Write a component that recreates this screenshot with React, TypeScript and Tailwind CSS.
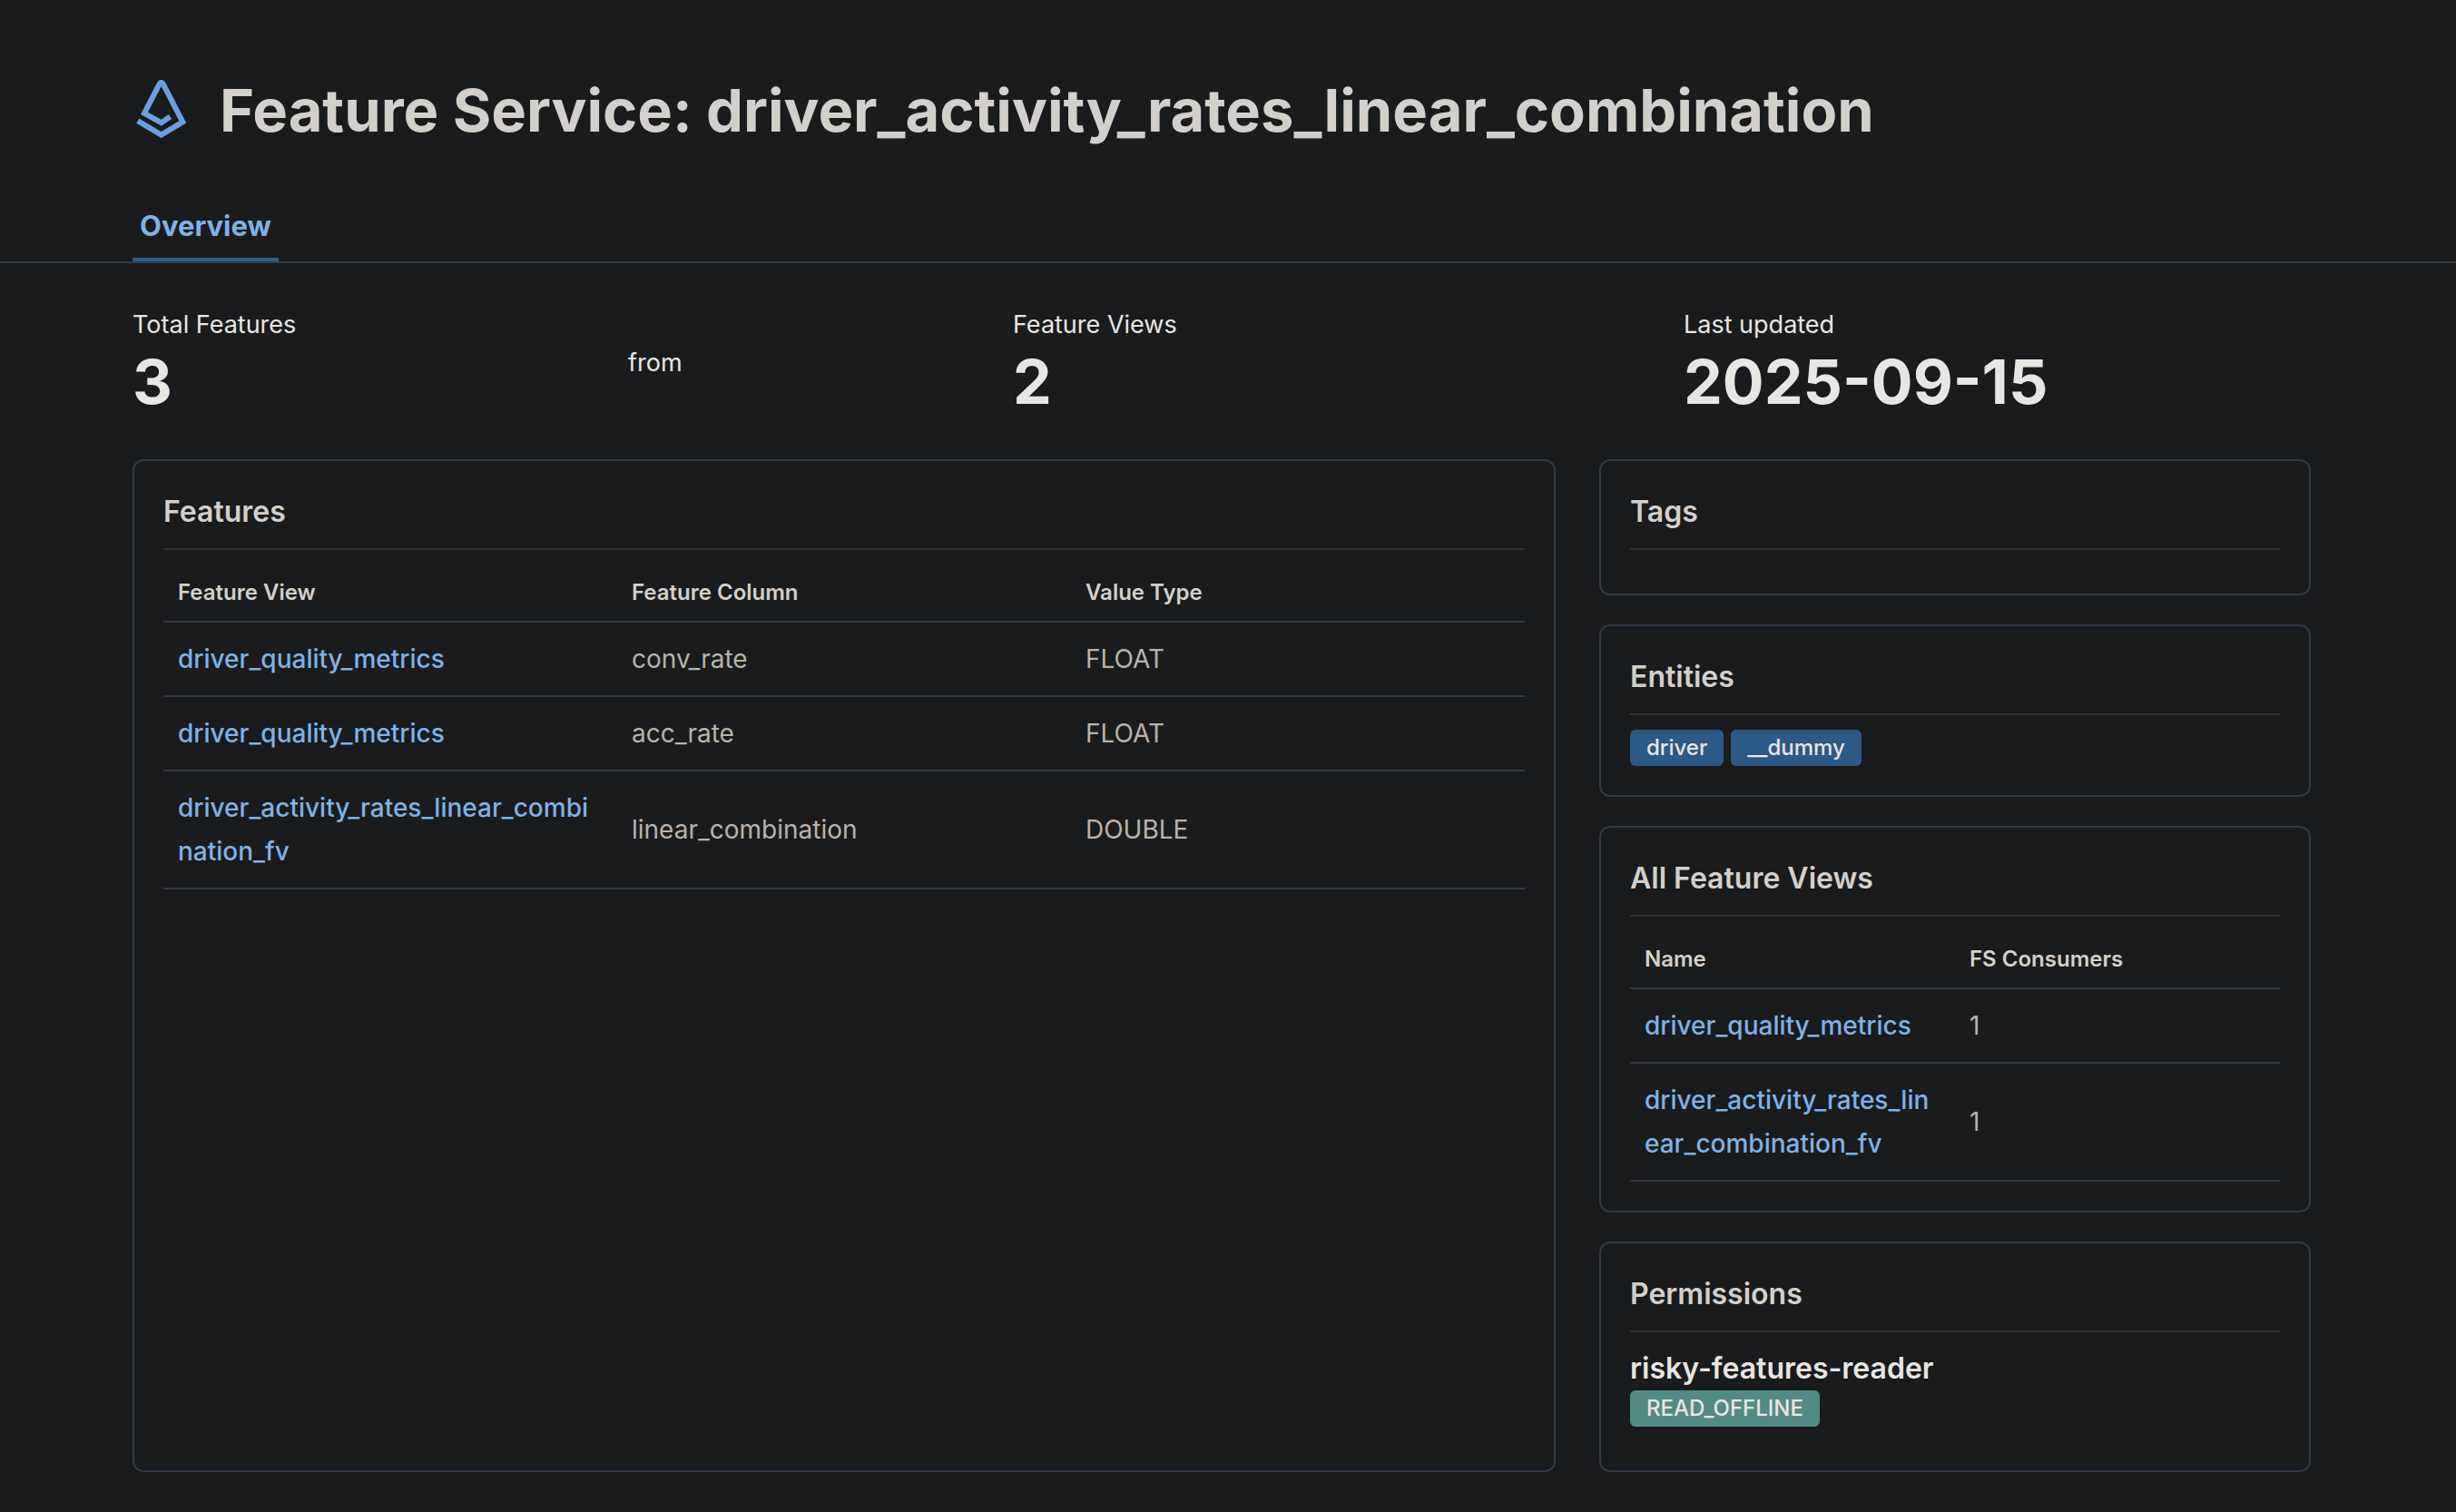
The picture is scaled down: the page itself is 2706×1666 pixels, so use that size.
import type { ReactNode } from "react";

const features = [
  { view: "driver_quality_metrics", column: "conv_rate", type: "FLOAT" },
  { view: "driver_quality_metrics", column: "acc_rate", type: "FLOAT" },
  {
    view: "driver_activity_rates_linear_combination_fv",
    column: "linear_combination",
    type: "DOUBLE",
  },
];

const featureViews = [
  { name: "driver_quality_metrics", consumers: 1 },
  { name: "driver_activity_rates_linear_combination_fv", consumers: 1 },
];

function ServiceIcon() {
  return (
    <svg viewBox="0 0 64 64" className="size-16 shrink-0" fill="none" stroke="#699fdc" strokeWidth="6" aria-hidden="true">
      <path d="M5.800 45.200 31.700 60.600 55.300 46.300 34.300 5.700Q31.700.200 29.100 5.700L13 36.900 31.700 47.200 41.500 40.600" />
    </svg>
  );
}

function Panel({ title, children }: { title: string; children?: ReactNode }) {
  return (
    <section className="rounded-xl border-2 border-[#313a49] p-8">
      <h2 className="text-[32px] leading-12 font-semibold text-[#d3d0cb]">{title}</h2>
      <hr className="my-4 border-t-2 border-[#303234]" />
      {children}
    </section>
  );
}

function Table({ columns, rows }: { columns: string[]; rows: ReactNode[][] }) {
  return (
    <table className="w-full table-fixed border-separate border-spacing-0 text-left">
      <thead>
        <tr>
          {columns.map((column) => (
            <th
              key={column}
              scope="col"
              className="h-16 border-b-2 border-[#313a49] px-4 text-2xl font-semibold text-[#d3d0cb]"
            >
              {column}
            </th>
          ))}
        </tr>
      </thead>
      <tbody>
        {rows.map((row, r) => (
          <tr key={r}>
            {row.map((cell, c) => (
              <td
                key={c}
                className="border-b-2 border-[#313a49] p-4 text-[28px] leading-12 break-words text-[#b8b3ab]"
              >
                {cell}
              </td>
            ))}
          </tr>
        ))}
      </tbody>
    </table>
  );
}

function TextLink({ children }: { children: ReactNode }) {
  return (
    <a href="#" className="font-medium text-[#7fb2e5] hover:underline">
      {children}
    </a>
  );
}

function Stat({ label, value }: { label: string; value: string }) {
  return (
    <div>
      <div className="text-[27px] leading-10">{label}</div>
      <div className="text-[68px] leading-21 font-bold">{value}</div>
    </div>
  );
}

export default function App() {
  return (
    <div className="min-h-screen bg-[#1a1b1c] pb-11 font-['Inter',sans-serif] text-[#e8e6e3]">
      <header className="border-b-2 border-[#313a49]">
        <div className="mx-auto w-full max-w-[2414px] pr-3.5">
          <div className="flex items-start gap-8 pt-22">
            <ServiceIcon />
            <h1 className="text-[65px] leading-17 font-bold text-[#d3d0cb]">
              Feature Service: driver_activity_rates_linear_combination
            </h1>
          </div>
          <div role="tablist" className="mt-13 flex">
            <button
              role="tab"
              aria-selected="true"
              className="h-20 border-b-4 border-[#2d5c8c] px-2 pt-1.5 text-[31px] font-bold text-[#7fb2e5]"
            >
              Overview
            </button>
          </div>
        </div>
      </header>
      <main className="mx-auto w-full max-w-[2414px] pt-12 pr-3.5">
        <div className="grid grid-cols-[498fr_376fr_691fr_691fr] items-center gap-12">
          <Stat label="Total Features" value="3" />
          <p className="text-[27px] leading-10">from</p>
          <Stat label="Feature Views" value="2" />
          <Stat label="Last updated" value="2025-09-15" />
        </div>
        <div className="mt-11 grid grid-cols-[2fr_1fr] gap-12">
          <Panel title="Features">
            <Table
              columns={["Feature View", "Feature Column", "Value Type"]}
              rows={features.map((f) => [<TextLink>{f.view}</TextLink>, f.column, f.type])}
            />
          </Panel>
          <div className="flex flex-col gap-8">
            <Panel title="Tags" />
            <Panel title="Entities">
              <div className="flex gap-2">
                {["driver", "__dummy"].map((entity) => (
                  <button key={entity} className="h-10 rounded-md bg-[#2c5985] px-4.5 text-2xl font-medium">
                    {entity}
                  </button>
                ))}
              </div>
            </Panel>
            <Panel title="All Feature Views">
              <Table
                columns={["Name", "FS Consumers"]}
                rows={featureViews.map((v) => [<TextLink>{v.name}</TextLink>, v.consumers])}
              />
            </Panel>
            <Panel title="Permissions">
              <h3 className="text-[32px] leading-12 font-semibold">risky-features-reader</h3>
              <span className="mb-4 flex h-10 w-fit items-center rounded-md bg-[#548a86] px-4.5 text-2xl font-medium">
                READ_OFFLINE
              </span>
            </Panel>
          </div>
        </div>
      </main>
    </div>
  );
}
